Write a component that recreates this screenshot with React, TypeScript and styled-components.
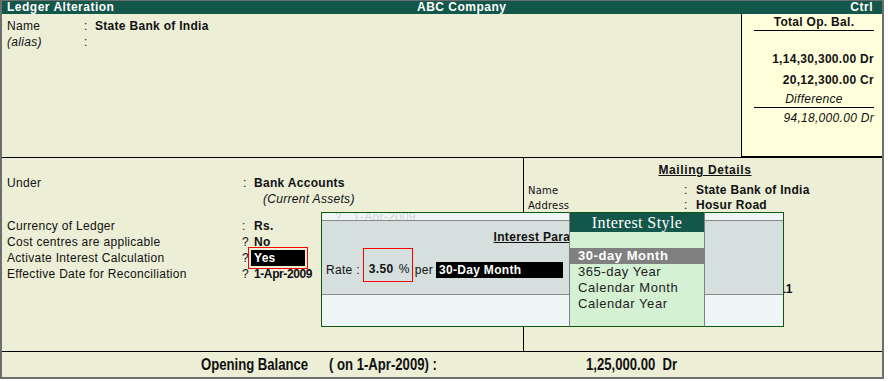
import React from 'react'
import styled, { createGlobalStyle } from 'styled-components'

const GlobalStyle = createGlobalStyle`
  html, body {
    margin: 0;
    padding: 0;
    background: #ffffff;
  }
  body {
    font-family: 'Liberation Sans', Arial, sans-serif;
    font-size: 12px;
    color: #111;
  }
`

const GREEN = '#13574a'

const Frame = styled.div`
  position: relative;
  width: 884px;
  height: 379px;
  box-sizing: border-box;
  border: 2px solid #6e6e6e;
  border-top-width: 1px;
  background: #eceed6;
  display: flex;
  flex-direction: column;
  letter-spacing: 0.3px;
`

const TitleBar = styled.div`
  height: 13px;
  line-height: 13px;
  background: ${GREEN};
  color: #fff;
  font-weight: bold;
  letter-spacing: 0.5px;
  display: grid;
  grid-template-columns: 410px 1fr auto;
  padding: 0 9px 0 5px;
`

const TopSection = styled.div`
  height: 143px;
  display: flex;
  border-bottom: 1px solid #000;
`

const NameBlock = styled.div`
  flex: 1;
  padding: 4px 0 0 5px;
`

const FieldGrid = styled.div<{ $label: number; $colon: number }>`
  display: grid;
  grid-template-columns: ${({ $label, $colon }) => `${$label}px ${$colon}px auto`};
  line-height: 16px;
`

const Label = styled.span<{ $italic?: boolean }>`
  font-style: ${({ $italic }) => ($italic ? 'italic' : 'normal')};
  white-space: nowrap;
`

const Value = styled.span<{ $spacing?: number }>`
  font-weight: bold;
  white-space: nowrap;
  letter-spacing: ${({ $spacing }) => ($spacing === undefined ? 'inherit' : `${$spacing}px`)};
`

const SubValue = styled.span`
  font-style: italic;
  padding-left: 9px;
  white-space: nowrap;
`

const BalanceBox = styled.div`
  width: 140px;
  border-left: 1px solid #000;
  background: #ffffdc;
  box-shadow: inset 0 -1px 0 #000;
  display: flex;
  flex-direction: column;
`

const BalTitle = styled.div`
  margin: 0 8px 0 12px;
  line-height: 16px;
  text-align: center;
  font-weight: bold;
  border-bottom: 1px solid #000;
`

const BalLine = styled.div<{ $top: number; $italic?: boolean; $center?: boolean; $rule?: boolean }>`
  margin: ${({ $top }) => $top}px 8px 0 12px;
  line-height: 16px;
  text-align: ${({ $center }) => ($center ? 'center' : 'right')};
  font-weight: ${({ $italic }) => ($italic ? 'normal' : 'bold')};
  font-style: ${({ $italic }) => ($italic ? 'italic' : 'normal')};
  border-bottom: ${({ $rule }) => ($rule ? '1px solid #000' : 'none')};
  white-space: nowrap;
`

const LowerSection = styled.div`
  height: 193px;
  display: flex;
  border-bottom: 1px solid #000;
`

const LeftPane = styled.div`
  width: 522px;
  box-sizing: border-box;
  border-right: 1px solid #000;
  padding: 17px 0 0 5px;
`

const Spacer = styled.div<{ $h: number }>`
  height: ${({ $h }) => $h}px;
`

const Highlight = styled.span`
  display: inline-block;
  box-sizing: border-box;
  margin-left: -3px;
  background: #000;
  color: #fff;
  font-weight: bold;
  width: 54px;
  padding-left: 3px;
  line-height: 16px;
  outline: 1px solid #ff0000;
  outline-offset: 2px;
`

const RightPane = styled.div`
  flex: 1;
  padding: 4px 0 0 4px;
`

const PaneTitle = styled.div`
  text-align: center;
  font-weight: bold;
  text-decoration: underline;
  letter-spacing: 0.6px;
  line-height: 16px;
  margin-bottom: 5px;
`

const SmallLabel = styled.span`
  font-family: 'DejaVu Sans', Verdana, sans-serif;
  font-size: 10px;
  letter-spacing: 0.2px;
`

const MailGrid = styled.div`
  display: grid;
  grid-template-columns: 156px 12px auto;
  line-height: 15px;
`

const Footer = styled.div`
  flex: 1;
  display: grid;
  grid-template-columns: 128px 257px auto;
  align-items: center;
  padding-left: 199px;
  font-weight: bold;
  font-size: 16px;
  letter-spacing: 0;
`

const FooterText = styled.span`
  display: inline-block;
  white-space: nowrap;
  transform: scaleX(0.82);
  transform-origin: left center;
`

/* Interest parameters sub-screen, drawn over the ledger form */
const Dialog = styled.div`
  position: absolute;
  left: 319px;
  top: 211px;
  width: 463px;
  height: 115px;
  box-sizing: border-box;
  border: 1px solid #0b5a0b;
  background: #eef6f6;
  display: flex;
  flex-direction: column;
`

const GhostStrip = styled.div`
  height: 7px;
  overflow: hidden;
  border-bottom: 1px solid #8a8a8a;
  padding-left: 13px;
  color: #cfd7d7;
  line-height: 12px;
  span {
    display: block;
    margin-top: -2px;
  }
`

const DialogBody = styled.div`
  height: 65px;
  background: #d5dfde;
  border-bottom: 1px solid #8a8a8a;
  padding: 8px 0 0 4px;
`

const DialogTitle = styled.div`
  text-align: center;
  font-weight: bold;
  text-decoration: underline;
  line-height: 16px;
  padding-right: 4px;
`

const RateRow = styled.div`
  margin-top: 17px;
  height: 16px;
  display: flex;
  align-items: flex-start;
  line-height: 16px;
`

const RateBox = styled.span`
  display: inline-flex;
  align-items: flex-end;
  justify-content: space-between;
  box-sizing: border-box;
  width: 50px;
  height: 34px;
  margin: -14px 2px 0 3px;
  padding: 0 2px 4px 5px;
  border: 1px solid #ff0000;
  b {
    font-weight: bold;
  }
`

const PerBox = styled.span`
  display: inline-block;
  box-sizing: border-box;
  margin-left: 3px;
  width: 127px;
  padding-left: 3px;
  background: #000;
  color: #fff;
  font-weight: bold;
`

const StylePopup = styled.div`
  position: absolute;
  left: 567px;
  top: 211px;
  width: 136px;
  height: 115px;
  box-sizing: border-box;
  border: 1px solid #808080;
  border-top-color: #0b5a0b;
  border-bottom-color: #0b5a0b;
  background: #d4f1d4;
`

const PopupHeader = styled.div`
  height: 19px;
  line-height: 19px;
  background: ${GREEN};
  color: #fff;
  text-align: center;
  font-family: 'Liberation Serif', 'Times New Roman', serif;
  font-size: 16px;
  letter-spacing: 0.4px;
`

const PopupItem = styled.div<{ $selected?: boolean }>`
  height: 16px;
  line-height: 16px;
  padding-left: 8px;
  font-size: 13px;
  letter-spacing: 0.55px;
  white-space: nowrap;
  background: ${({ $selected }) => ($selected ? '#808080' : 'transparent')};
  color: ${({ $selected }) => ($selected ? '#fff' : '#222')};
  font-weight: ${({ $selected }) => ($selected ? 'bold' : 'normal')};
`

const styles = ['30-day Month', '365-day Year', 'Calendar Month', 'Calendar Year']

export default function App() {
  return (
    <>
      <GlobalStyle />
      <Frame>
        <TitleBar>
          <span>Ledger Alteration</span>
          <span>ABC Company</span>
          <span>Ctrl</span>
        </TitleBar>

        <TopSection>
          <NameBlock>
            <FieldGrid $label={77} $colon={11}>
              <Label>Name</Label>
              <span>:</span>
              <Value>State Bank of India</Value>
              <Label $italic>(alias)</Label>
              <span>:</span>
              <span />
            </FieldGrid>
          </NameBlock>
          <BalanceBox>
            <BalTitle>Total Op. Bal.</BalTitle>
            <BalLine $top={20}>1,14,30,300.00 Dr</BalLine>
            <BalLine $top={5}>20,12,300.00 Cr</BalLine>
            <BalLine $top={3} $italic $center $rule>
              Difference
            </BalLine>
            <BalLine $top={2} $italic>
              94,18,000.00 Dr
            </BalLine>
          </BalanceBox>
        </TopSection>

        <LowerSection>
          <LeftPane>
            <FieldGrid $label={236} $colon={11}>
              <Label>Under</Label>
              <span>:</span>
              <Value>Bank Accounts</Value>
              <span />
              <span />
              <SubValue>(Current Assets)</SubValue>
            </FieldGrid>
            <Spacer $h={11} />
            <FieldGrid $label={235} $colon={12}>
              <Label>Currency of Ledger</Label>
              <span>:</span>
              <Value>Rs.</Value>
              <Label>Cost centres are applicable</Label>
              <span>?</span>
              <Value>No</Value>
              <Label>Activate Interest Calculation</Label>
              <span>?</span>
              <span>
                <Highlight>Yes</Highlight>
              </span>
              <Label>Effective Date for Reconciliation</Label>
              <span>?</span>
              <Value $spacing={-0.4}>1-Apr-2009</Value>
            </FieldGrid>
          </LeftPane>

          <RightPane>
            <PaneTitle>Mailing Details</PaneTitle>
            <MailGrid>
              <SmallLabel>Name</SmallLabel>
              <span>:</span>
              <Value>State Bank of India</Value>
              <SmallLabel>Address</SmallLabel>
              <span>:</span>
              <Value>Hosur Road</Value>
            </MailGrid>
            <Spacer $h={69} />
            <MailGrid>
              <span />
              <span />
              <Value $spacing={0.6}>Bangalore-5011</Value>
            </MailGrid>
          </RightPane>
        </LowerSection>

        <Footer>
          <FooterText>Opening Balance</FooterText>
          <FooterText>( on 1-Apr-2009) :</FooterText>
          <FooterText>1,25,000.00&nbsp; Dr</FooterText>
        </Footer>

        <Dialog>
          <GhostStrip>
            <span>?&nbsp;&nbsp; 1-Apr-2009</span>
          </GhostStrip>
          <DialogBody>
            <DialogTitle>Interest Parameters</DialogTitle>
            <RateRow>
              <span>Rate :</span>
              <RateBox>
                <b>3.50</b>
                <span>%</span>
              </RateBox>
              <span>per</span>
              <PerBox>30-Day Month</PerBox>
            </RateRow>
          </DialogBody>
        </Dialog>

        <StylePopup>
          <PopupHeader>Interest Style</PopupHeader>
          <PopupItem />
          {styles.map((s, i) => (
            <PopupItem key={s} $selected={i === 0}>
              {s}
            </PopupItem>
          ))}
        </StylePopup>
      </Frame>
    </>
  )
}
